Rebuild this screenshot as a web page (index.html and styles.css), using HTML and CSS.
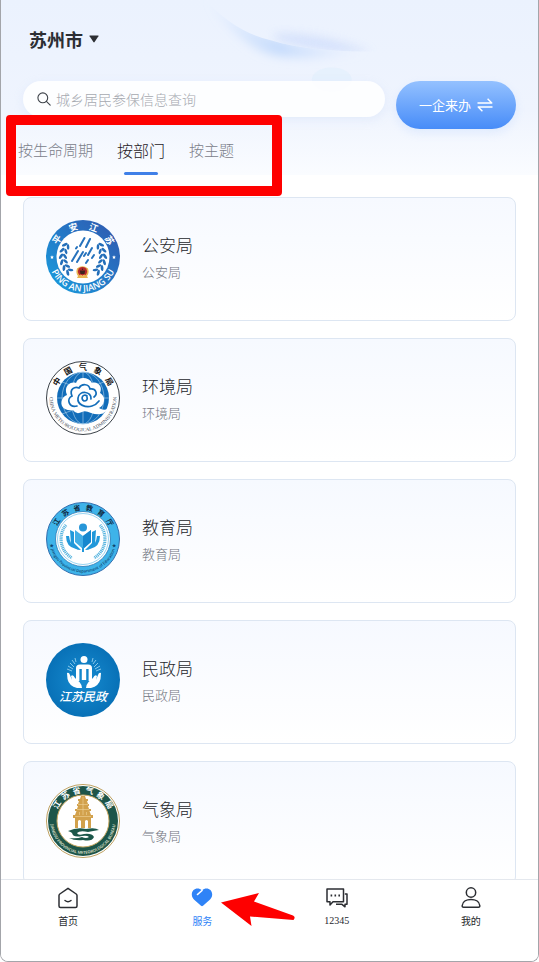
FILE: index.html
```
<!DOCTYPE html>
<html lang="zh-CN">
<head>
    <meta charset="UTF-8">
    <meta name="viewport" content="width=device-width, initial-scale=1">
    <title>服务</title>
    <link rel="stylesheet" href="styles.css">
</head>
<body>

<!-- shared wreath shapes -->
<svg class="defs" aria-hidden="true">
    <defs>
        <g id="leafPair">
            <ellipse cx="15" cy="37" rx="1.4" ry="3.1" transform="rotate(32 15 37)"/>
            <ellipse cx="19" cy="37" rx="1.3" ry="2.9" transform="rotate(-36 19 37)"/>
        </g>
        <g id="branch">
            <use href="#leafPair" transform="rotate(34 37 37)"/>
            <use href="#leafPair" transform="rotate(18 37 37)"/>
            <use href="#leafPair" transform="rotate(2 37 37)"/>
            <use href="#leafPair" transform="rotate(-14 37 37)"/>
            <use href="#leafPair" transform="rotate(-30 37 37)"/>
            <use href="#leafPair" transform="rotate(-46 37 37)"/>
        </g>
    </defs>
</svg>

<header class="top">
    <svg class="wisp" viewBox="0 0 539 176" preserveAspectRatio="none" aria-hidden="true">
        <defs>
            <linearGradient id="wispFill" x1="0" x2="1">
                <stop offset="0" stop-color="#c3dafc" stop-opacity="0"/>
                <stop offset=".45" stop-color="#c3dafc" stop-opacity=".9"/>
                <stop offset="1" stop-color="#d5e2fc" stop-opacity="0"/>
            </linearGradient>
            <clipPath id="underEdge"><path d="M205 0Q235 32 269 40Q310 53 385 52V90H180V0Z"/></clipPath>
            <clipPath id="overEdge"><path d="M205 0Q235 32 269 40Q310 53 385 52V0Z"/></clipPath>
            <filter id="soft" x="-20%" y="-50%" width="140%" height="200%"><feGaussianBlur stdDeviation="5"/></filter>
        </defs>
        <g clip-path="url(#underEdge)">
            <path d="M205 -5Q235 28 269 36Q310 50 370 50Q300 66 262 52Q226 34 205 -5Z" fill="url(#wispFill)" filter="url(#soft)"/>
        </g>
        <g clip-path="url(#overEdge)">
            <path d="M275 34Q320 32 372 53Q320 54 275 40Z" fill="#cfddfb" opacity=".8" filter="url(#soft)"/>
        </g>
        <ellipse cx="332" cy="80" rx="20" ry="12" fill="#e2f0fc" opacity=".7"/>
    </svg>

    <button class="city" type="button">苏州市<svg width="10" height="8" viewBox="0 0 10 8"><path d="M.8.5H9.2Q9.8.5 9.4 1.2L5.6 7Q5 7.8 4.4 7L.6 1.2Q.2.5.8.5Z" fill="#2c2e33"/></svg></button>

    <form class="searchRow">
        <div class="searchBox">
            <svg width="14" height="14" viewBox="0 0 14 14" fill="none" stroke="#3d4249" stroke-width="1.1" stroke-linecap="round"><circle cx="5.8" cy="5.8" r="4.9"/><path d="M9.4 9.4L13.2 13.2"/></svg>
            <input type="text" aria-label="搜索" placeholder="城乡居民参保信息查询">
        </div>
        <button class="switch" type="button">一企来办<svg width="16" height="14" viewBox="0 0 16 14" fill="none" stroke="#fff" stroke-width="1.4" stroke-linejoin="round"><path d="M.5 5H14.8L10.6.8M15.5 9H1.2L5.4 13.2"/></svg></button>
    </form>

    <nav class="tabs">
        <a href="#life">按生命周期</a>
        <a href="#dept" class="active">按部门</a>
        <a href="#theme">按主题</a>
    </nav>
</header>

<main class="list">

    <a class="card" href="#gongan">
        <svg class="logo" viewBox="0 0 74 74">
            <defs><linearGradient id="police" x1="1" x2="0" y1="0" y2="1"><stop offset="0" stop-color="#3156ad"/><stop offset=".5" stop-color="#2479c7"/><stop offset="1" stop-color="#18a0df"/></linearGradient></defs>
            <circle cx="37" cy="37" r="37" fill="url(#police)"/>
            <circle cx="37" cy="37" r="26.5" fill="#fff"/>
            <g class="ring" fill="#fff" font-size="9" font-weight="700">
                <text x="37" y="9" transform="rotate(-56 37 37)">平</text>
                <text x="37" y="9" transform="rotate(-18 37 37)">安</text>
                <text x="37" y="9" transform="rotate(20 37 37)">江</text>
                <text x="37" y="9" transform="rotate(58 37 37)">苏</text>
            </g>
            <path id="arcPolice" d="M2.5 37A34.5 34.5 0 0 0 71.5 37" fill="none"/>
            <text class="latin" fill="#fff" font-size="9" font-weight="600"><textPath href="#arcPolice" startOffset="50%">PING AN JIANG SU</textPath></text>
            <path d="M6 35.3l.6 1.2 1.3.2-1 .9.3 1.3-1.2-.6-1.2.6.3-1.3-1-.9 1.3-.2zM68 35.3l.6 1.2 1.3.2-1 .9.3 1.3-1.2-.6-1.2.6.3-1.3-1-.9 1.3-.2z" fill="#fff"/>
            <g fill="#246fb9"><use href="#branch"/><use href="#branch" transform="matrix(-1 0 0 1 74 0)"/></g>
            <g stroke="#2672bc" stroke-width="2" stroke-linecap="round">
                <path d="M38.5 18L34 26M44 19L40 27M32 31L26 41M37 32L31 42M40 33L38 36M46 28L42 35M48 35L46 38M42 40L40 43M31 27L30 28.5"/>
            </g>
            <path d="M31 48.5Q36.5 44 42 48.5Q43.5 53 41 56L42 58H31L32 56Q29.5 53 31 48.5Z" fill="#e9b44f"/>
            <circle cx="36.5" cy="51.5" r="4.6" fill="#b5282c"/>
            <path d="M33.8 50.5H39.2L38.5 54H34.5ZM36.5 48L37.2 50H35.8Z" fill="#3d241e"/>
            <path d="M34 55Q36.5 57 39 55" stroke="#f3cd63" fill="none"/>
        </svg>
        <div class="info">
            <h2>公安局</h2>
            <p>公安局</p>
        </div>
    </a>

    <a class="card" href="#huanjing">
        <svg class="logo" viewBox="0 0 74 74">
            <circle cx="37" cy="37" r="36.5" fill="#fff" stroke="#3b4249"/>
            <circle cx="37" cy="37" r="26" fill="#126db9"/>
            <g stroke="#b2d4ed" stroke-width=".6" fill="none">
                <path d="M37 11V63M11 37H63M16 21Q37 31 58 21M16 53Q37 43 58 53"/>
                <ellipse cx="37" cy="37" rx="12" ry="26"/><ellipse cx="37" cy="37" rx="21" ry="26"/>
            </g>
            <path d="M19 48C13 45 15 36 21 34C17 25 25 20 30 22C32 15 43 16 46 22C52 20 57 26 54 32C61 36 58 45 53 47Q57 50 62 48Q56 56 45 52Q39 49 36 51Q30 54 27 49Q23 50 19 48Z" fill="#fff"/>
            <path d="M31 45C23 47 20 38 26 35C23 28 29 25 33 27C36 22 43 23 44 28C50 27 52 33 48 36" fill="none" stroke="#126db9" stroke-width="1.7" stroke-linecap="round"/>
            <path d="M45 38C46 30 33 29 32 37C31 44 40 47 46 45Q50 44 53 40M41 35C37 32 34 38 38 40Q42 40 41 36" fill="none" stroke="#126db9" stroke-width="1.7" stroke-linecap="round"/>
            <g class="ring" fill="#111" font-size="8" font-weight="700">
                <text x="37" y="9" transform="rotate(-58 37 37)">中</text>
                <text x="37" y="9" transform="rotate(-29 37 37)">国</text>
                <text x="37" y="9">气</text>
                <text x="37" y="9" transform="rotate(29 37 37)">象</text>
                <text x="37" y="9" transform="rotate(58 37 37)">局</text>
            </g>
            <path id="arcMeteo" d="M4.2 30A33.5 33.5 0 1 0 69.8 30" fill="none"/>
            <text class="serif" fill="#3f4c58" font-size="5"><textPath href="#arcMeteo" startOffset="50%">CHINA METEOROLOGICAL ADMINISTRATION</textPath></text>
        </svg>
        <div class="info">
            <h2>环境局</h2>
            <p>环境局</p>
        </div>
    </a>

    <a class="card" href="#jiaoyu">
        <svg class="logo" viewBox="0 0 74 74">
            <circle cx="37" cy="37" r="36.5" fill="#3eb3e9" stroke="#336fb0"/>
            <circle cx="37" cy="37" r="27.5" fill="#fff" stroke="#2677b4" stroke-width=".8"/>
            <circle cx="37" cy="37" r="25.5" fill="none" stroke="#7fc9ed" stroke-width=".8"/>
            <g class="ring" fill="#10283d" font-size="7" font-weight="700">
                <text x="37" y="8" transform="rotate(-57 37 37)">江</text>
                <text x="37" y="8" transform="rotate(-34 37 37)">苏</text>
                <text x="37" y="8" transform="rotate(-11 37 37)">省</text>
                <text x="37" y="8" transform="rotate(12 37 37)">教</text>
                <text x="37" y="8" transform="rotate(35 37 37)">育</text>
                <text x="37" y="8" transform="rotate(58 37 37)">厅</text>
            </g>
            <path id="arcEdu" d="M3.5 37A33.5 33.5 0 0 0 70.5 37" fill="none"/>
            <text class="latin" fill="#0f4570" font-size="4" font-weight="600"><textPath href="#arcEdu" startOffset="50%">★ Jiangsu Provincial Department of Education ★</textPath></text>
            <g fill="none" stroke="#56b4df" stroke-width="3.2" stroke-dasharray="1.1 .7">
                <path d="M20 23A22 22 0 0 0 26 56M54 23A22 22 0 0 1 48 56"/>
            </g>
            <circle cx="37" cy="25.5" r="4" fill="#2796d8"/>
            <path d="M37 34L29 28V40L37 47L45 40V28Z" fill="#42aee5"/>
            <path d="M37 34L45 28V40L37 47Z" fill="#1687ce"/>
            <path d="M24 28L28 30V41L35 48Q28 48 25 42ZM50 28L46 30V41L39 48Q46 48 49 42ZM20 34L23 34Q24 43 30 47Q20 45 20 34ZM54 34L51 34Q50 43 44 47Q54 45 54 34Z" fill="#2198da"/>
            <path d="M36 45H38V50H36Z" fill="#2198da"/>
        </svg>
        <div class="info">
            <h2>教育局</h2>
            <p>教育局</p>
        </div>
    </a>

    <a class="card" href="#minzheng">
        <svg class="logo" viewBox="0 0 74 74">
            <defs><radialGradient id="civil"><stop offset="0" stop-color="#168bd0"/><stop offset="1" stop-color="#0871b7"/></radialGradient></defs>
            <circle cx="37" cy="37" r="37" fill="url(#civil)"/>
            <circle cx="38" cy="16.5" r="3.5" fill="#fff"/>
            <path d="M30 38V25Q30 21.5 34 21.5H42Q46 21.5 46 25V38H42.6V26H40.2V37H35.8V26H33.4V38Z" fill="#fff"/>
            <path d="M21 30Q23 29 24 32L26 37L25 33Q27 31 29 35L33.500 39Q36 42 36 45H31Q23 43 21.500 36ZM55 30Q53 29 52 32L50 37L51 33Q49 31 47 35L42.500 39Q40 42 40 45H45Q53 43 54.500 36Z" fill="#fff"/>
            <g stroke="#a7daf4" stroke-width=".8"><path d="M21 26L26 28M22 23L27 26M24 20L28 24M26 17L29 21M29 15L30 19M55 26L50 28M54 23L49 26M52 20L48 24M50 17L47 21M47 15L46 19"/></g>
            <text class="script" x="37" y="58" fill="#fff" font-size="12">江苏民政</text>
        </svg>
        <div class="info">
            <h2>民政局</h2>
            <p>民政局</p>
        </div>
    </a>

    <a class="card" href="#qixiang">
        <svg class="logo" viewBox="0 0 74 74">
            <circle cx="37" cy="37" r="36.5" fill="#fff" stroke="#bea05f"/>
            <circle cx="37" cy="37" r="35" fill="#1d5549"/>
            <circle cx="37" cy="37" r="26" fill="#fff" stroke="#c9a963"/>
            <g class="ring" fill="#fff" font-size="8" font-weight="700">
                <text x="37" y="9" transform="rotate(-58 37 37)">江</text>
                <text x="37" y="9" transform="rotate(-35 37 37)">苏</text>
                <text x="37" y="9" transform="rotate(-12 37 37)">省</text>
                <text x="37" y="9" transform="rotate(12 37 37)">气</text>
                <text x="37" y="9" transform="rotate(35 37 37)">象</text>
                <text x="37" y="9" transform="rotate(58 37 37)">局</text>
            </g>
            <path id="arcBureau" d="M4.8 33A32.5 32.5 0 1 0 69.2 33" fill="none"/>
            <text class="latin" fill="#e6e8d6" font-size="4" font-weight="600"><textPath href="#arcBureau" startOffset="50%">JIANGSU PROVINCIAL METEOROLOGICAL BUREAU</textPath></text>
            <path d="M35 12H39L40 15H42V17H41L42 20H43V22H42L43 25H45V27H43.5L45 31H47V34H45V44H42V37Q40.5 35 39 37V44H35V37Q33.5 35 32 37V44H29V34H27V31H29L30.5 27H29V25H31L32 22H31V20H32L33 17H32V15H34Z" fill="#d2a14c"/>
            <path d="M32 20.5H42M31 25.5H43M29 32.5H45M37 13V31M33.5 28V31M40.5 28V31" stroke="#f6dda8" stroke-width=".5"/>
            <path d="M22 47Q31 43 40 45Q49 43 53 46Q47 47 42 48Q34 46 31 49Q32 52 38 50Q46 49 48 53Q46 58 37 56Q29 57 23 54Q31 55 36 53Q40 55 43 53Q41 51 36 52Q27 54 26 49Q25 48 22 47Z" fill="#1b574a"/>
        </svg>
        <div class="info">
            <h2>气象局</h2>
            <p>气象局</p>
        </div>
    </a>

</main>

<nav class="bottom">
    <a href="#home">
        <svg width="22" height="22" viewBox="0 0 22 22" fill="none" stroke="#2c2e33" stroke-width="1.5" stroke-linejoin="round" stroke-linecap="round"><path d="M11 1.3L19.2 7Q20 7.6 20 8.6V19Q20 20.5 18.5 20.5H3.5Q2 20.5 2 19V8.6Q2 7.6 2.8 7Z"/><path d="M8 13.5Q11 16 14 13.5"/></svg>
        首页
    </a>
    <a href="#service" class="active">
        <svg width="22" height="22" viewBox="0 0 22 22"><path d="M11 3.500C7-.5.8 2 .8 7.500C.8 10 2 11.500 3.200 12.700L10 18.800Q11 19.600 12 18.800L18.800 12.700C20 11.500 21.200 10 21.200 7.500C21.200 2 15-.5 11 3.500Z" fill="#2f83f7"/><path d="M11 3.500L6.500 7.500" stroke="#fff" stroke-width="1.6" stroke-linecap="round"/></svg>
        服务
    </a>
    <a href="#hotline" class="num">
        <svg width="22" height="22" viewBox="0 0 22 22" fill="none" stroke="#2c2e33" stroke-width="1.5" stroke-linejoin="round"><path d="M1 2H17.500V14.800H7L4 18V14.800H1Z"/><path d="M18.800 7H21V17.300H19V19.800L16 17.300H10"/><path d="M4.600 8.500H6.200M8.500 8.500H10.100M12.400 8.500H14" stroke-width="1.8"/></svg>
        12345
    </a>
    <a href="#mine">
        <svg width="22" height="22" viewBox="0 0 22 22" fill="none" stroke="#2c2e33" stroke-width="1.5" stroke-linejoin="round"><circle cx="11" cy="5.5" r="4.7"/><path d="M3.500 20.200Q2 20.200 2.200 18.500C3 10.500 19 10.500 19.800 18.500Q20 20.200 18.500 20.200Z"/></svg>
        我的
    </a>
</nav>

<!-- highlight marks over the page -->
<div class="markBox"></div>
<svg class="markArrow" width="76" height="34" viewBox="0 0 76 34"><path d="M0 9.5L38 0L33 8.5L72 22.5Q75 24 72.5 27L29 23.5L30.5 33Z" fill="#fe0000"/></svg>

</body>
</html>
```

FILE: styles.css
```
* {
    box-sizing: border-box;
}
body {
    display: flex;
    flex-direction: column;
    position: relative;
    height: 100vh;
    margin: 0;
    overflow: hidden;
    border: 1px solid #a3a5aa;
    border-top: 0;
    border-radius: 0 0 8px 8px;
    background-color: #fff;
    color: #25272c;
    font-family: "Noto Sans CJK SC", sans-serif;
    font-weight: 300;
}
a {
    color: inherit;
    text-decoration: none;
}
button {
    border: 0;
    padding: 0;
    font-family: inherit;
}
.defs {
    position: absolute;
    width: 0;
    height: 0;
}

/* top area */
.top {
    position: relative;
    flex: none;
    padding: 27px 22px 0;
    background: linear-gradient(to bottom, #ebf2fe 0, #eff4fe 110px, #fafcff 100%);
}
.wisp {
    position: absolute;
    top: 0;
    left: 0;
    width: 100%;
    height: 100%;
}
.city {
    position: relative;
    display: flex;
    align-items: center;
    gap: 6px;
    padding-left: 6px;
    background: none;
    color: #2c2e33;
    font-size: 18px;
    font-weight: 700;
    line-height: 24px;
}
.searchRow {
    position: relative;
    display: flex;
    align-items: flex-start;
    gap: 11px;
    margin: 30px 0 0;
}
.searchBox {
    flex: 1;
    display: flex;
    align-items: center;
    gap: 5px;
    height: 36px;
    padding: 0 14px;
    border-radius: 18px;
    background-color: rgba(255, 255, 255, .85);
    box-shadow: 0 3px 10px rgba(190, 210, 245, .25);
}
.searchBox input {
    flex: 1;
    min-width: 0;
    border: 0;
    padding: 0;
    outline: 0;
    background: none;
    font-family: inherit;
    font-size: 14px;
    font-weight: 300;
}
.searchBox input::placeholder {
    color: #a6a9b0;
}
.switch {
    display: flex;
    align-items: center;
    justify-content: center;
    gap: 6px;
    width: 120px;
    height: 48px;
    border-radius: 24px;
    background: linear-gradient(to bottom, #94c1ff, #478cf8);
    box-shadow: 0 4px 10px rgba(150, 190, 250, .2);
    color: #fff;
    font-size: 13px;
    line-height: 20px;
}
.tabs {
    position: relative;
    display: flex;
    gap: 24px;
    height: 46px;
    margin-left: -5px;
    color: #7b808a;
    font-size: 15px;
    line-height: 42px;
}
.tabs .active {
    position: relative;
    color: #1f2126;
    font-size: 16px;
}
.tabs .active::after {
    content: "";
    position: absolute;
    left: 7px;
    right: 7px;
    bottom: 0;
    height: 3px;
    border-radius: 2px;
    background-color: #4080e8;
}

/* department cards */
.list {
    flex: 1;
    min-height: 0;
    display: flex;
    flex-direction: column;
    gap: 17px;
    padding: 22px 22px 0;
    overflow: hidden;
}
.card {
    flex: none;
    display: flex;
    align-items: flex-start;
    gap: 22px;
    min-height: 124px;
    padding: 22px;
    border: 1px solid #dde6f2;
    border-radius: 8px;
    background: linear-gradient(to bottom, #f6f9ff, #fff);
}
.logo {
    flex: none;
    width: 74px;
    height: 74px;
}
.info {
    padding-top: 11px;
}
.info h2 {
    margin: 0;
    font-size: 17px;
    font-weight: 300;
    line-height: 28px;
}
.info p {
    margin: 0;
    color: #70747e;
    font-size: 13px;
    line-height: 26px;
}
.ring,
.latin,
.serif,
.script {
    text-anchor: middle;
}
.latin {
    font-family: "Open Sans", sans-serif;
}
.serif {
    font-family: "Liberation Serif", serif;
}
.script {
    font-style: italic;
    font-weight: 500;
}

/* bottom menu */
.bottom {
    flex: none;
    display: flex;
    height: 82px;
    padding-top: 7px;
    border-top: 1px solid #e4e8ee;
    background-color: #fff;
}
.bottom a {
    flex: 1;
    display: flex;
    flex-direction: column;
    align-items: center;
    gap: 5px;
    font-size: 10px;
    font-weight: 400;
    line-height: 14px;
}
.bottom .active {
    color: #2f83f7;
}
.bottom .num {
    font-family: "Liberation Serif", serif;
}

/* red marks */
.markBox {
    position: absolute;
    left: 5px;
    top: 115px;
    width: 276px;
    height: 81px;
    border: 10px solid #fe0000;
    border-radius: 4px;
}
.markArrow {
    position: absolute;
    left: 220px;
    top: 893px;
}
```
